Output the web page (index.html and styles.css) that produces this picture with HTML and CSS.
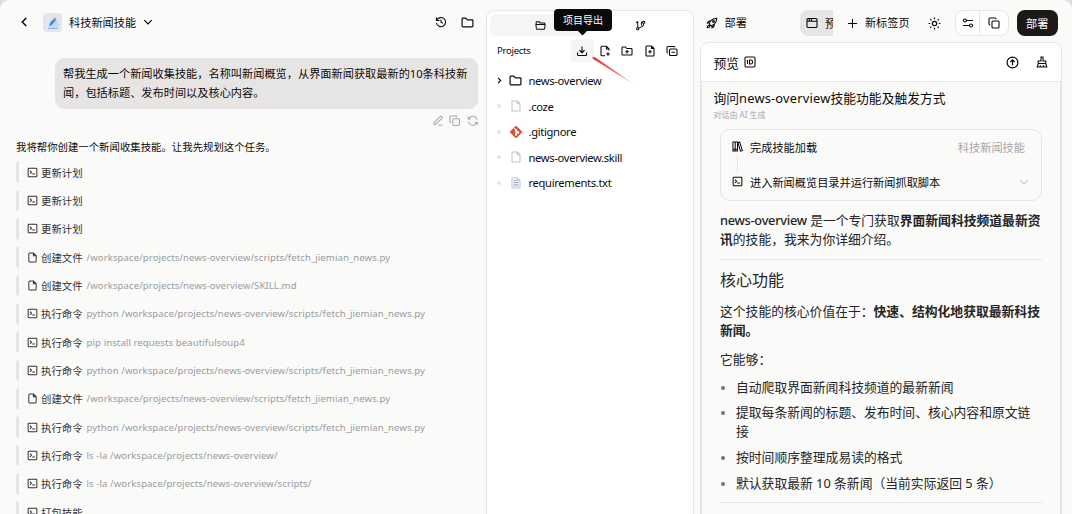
FILE: index.html
```
<!DOCTYPE html>
<html lang="zh-CN">
<head>
  <meta charset="UTF-8" />
  <meta name="viewport" content="width=device-width, initial-scale=1.0"/>
  <title>科技新闻技能</title>
  <link rel="stylesheet" href="styles.css">
</head>
<body>
  <!-- shared icons -->
  <svg class="sprite">
    <symbol id="i-term" viewBox="0 0 24 24"><rect x="2.5" y="2.5" width="19" height="19" rx="2"/><path d="M6.5 8l3.5 3.5L6.5 15M11.500 15.500h6"/></symbol>
    <symbol id="i-doc" viewBox="0 0 24 24"><path d="M14 2H6.500a2.500 2.500 0 0 0-2.500 2.500v15A2.500 2.500 0 0 0 6.500 22h11a2.500 2.500 0 0 0 2.500-2.500V8zM14 2v6h6"/></symbol>
    <symbol id="i-page" viewBox="0 0 24 24"><path d="M14.500 2H4v20h16V7.500zM14.500 2v5.500H20"/></symbol>
    <symbol id="i-folder" viewBox="0 0 24 24"><path d="M2 5.500A1.500 1.500 0 0 1 3.500 4h5.300l2.700 3h9A1.500 1.500 0 0 1 22 8.500v10a1.500 1.500 0 0 1-1.500 1.500h-17A1.500 1.500 0 0 1 2 18.500z"/></symbol>
    <symbol id="i-copy" viewBox="0 0 24 24"><rect x="8" y="8" width="14" height="14" rx="2"/><path d="M4.500 16H4a2 2 0 0 1-2-2V4a2 2 0 0 1 2-2h10a2 2 0 0 1 2 2v.5"/></symbol>
    <symbol id="i-down" viewBox="0 0 24 24"><path d="M3 7.500l9 9 9-9"/></symbol>
  </svg>

  <div class="app">
    <section class="chat">
      <header class="chatHeader">
        <svg class="icon back" viewBox="0 0 24 24"><path d="M16.500 4l-8 8 8 8"/></svg>
        <span class="avatar">
          <svg viewBox="0 0 19 19"><path d="M5 15L8 8l5-4 3 8-2 3z" fill="#bcdcf5"/><path d="M6 13l1.500-4L12 5l1 2-4 5z" fill="#4b84df"/><path d="M10 6l2.500-1.500.5 2-1.500 1z" fill="#f17975"/><path d="M5 15.500h10" stroke="#9bb1ec" stroke-width="1"/></svg>
        </span>
        <span class="chatTitle">科技新闻技能</span>
        <svg class="icon titleArrow"><use href="#i-down"/></svg>
        <svg class="icon history" viewBox="0 0 24 24"><path d="M3.500 8.500a9.200 9.200 0 1 1-.6 5.500M3 3v6h6M12 7v5.500l4 2"/></svg>
        <svg class="icon headFolder"><use href="#i-folder"/></svg>
      </header>

      <div class="bubble">帮我生成一个新闻收集技能，名称叫新闻概览，从界面新闻获取最新的10条科技新闻，包括标题、发布时间以及核心内容。</div>
      <div class="bubbleActions">
        <svg class="icon" viewBox="0 0 24 24"><path d="M4 20l1-5L17 3.500a2.200 2.200 0 0 1 3.500 3.500L9 18.500zM13 21.500h9"/></svg>
        <svg class="icon"><use href="#i-copy"/></svg>
        <svg class="icon" viewBox="0 0 24 24"><path d="M21 10A9 9 0 0 0 5 6L2.500 8.500M2.500 3v5.500H8M3 14a9 9 0 0 0 16 4l2.500-2.500M21.500 21v-5.500H16"/></svg>
      </div>

      <p class="intro">我将帮你创建一个新闻收集技能。让我先规划这个任务。</p>
      <div class="steps">
        <div class="step"><svg class="icon"><use href="#i-term"/></svg>更新计划</div>
        <div class="step"><svg class="icon"><use href="#i-term"/></svg>更新计划</div>
        <div class="step"><svg class="icon"><use href="#i-term"/></svg>更新计划</div>
        <div class="step"><svg class="icon"><use href="#i-doc"/></svg>创建文件<code>/workspace/projects/news-overview/scripts/fetch_jiemian_news.py</code></div>
        <div class="step"><svg class="icon"><use href="#i-doc"/></svg>创建文件<code>/workspace/projects/news-overview/SKILL.md</code></div>
        <div class="step"><svg class="icon"><use href="#i-term"/></svg>执行命令<code>python /workspace/projects/news-overview/scripts/fetch_jiemian_news.py</code></div>
        <div class="step"><svg class="icon"><use href="#i-term"/></svg>执行命令<code>pip install requests beautifulsoup4</code></div>
        <div class="step"><svg class="icon"><use href="#i-term"/></svg>执行命令<code>python /workspace/projects/news-overview/scripts/fetch_jiemian_news.py</code></div>
        <div class="step"><svg class="icon"><use href="#i-doc"/></svg>创建文件<code>/workspace/projects/news-overview/scripts/fetch_jiemian_news.py</code></div>
        <div class="step"><svg class="icon"><use href="#i-term"/></svg>执行命令<code>python /workspace/projects/news-overview/scripts/fetch_jiemian_news.py</code></div>
        <div class="step"><svg class="icon"><use href="#i-term"/></svg>执行命令<code>ls -la /workspace/projects/news-overview/</code></div>
        <div class="step"><svg class="icon"><use href="#i-term"/></svg>执行命令<code>ls -la /workspace/projects/news-overview/scripts/</code></div>
        <div class="step"><svg class="icon"><use href="#i-term"/></svg>打包技能</div>
      </div>
    </section>

    <section class="files">
      <div class="fileTabs">
        <div class="fileTab active"><svg class="icon" viewBox="0 0 24 24"><path d="M2.500 10V5.500A1.500 1.500 0 0 1 4 4h5l2.500 2.500H20A1.500 1.500 0 0 1 21.500 8v2M2 10h20l-1 9a1.500 1.500 0 0 1-1.500 1.300h-15A1.500 1.500 0 0 1 3 19z"/></svg></div>
        <div class="fileTab"><svg class="icon" viewBox="0 0 24 24"><circle cx="6" cy="19" r="2.500"/><circle cx="19" cy="5" r="2.500"/><path d="M6 16.500V3M2.500 6.500L6 3M19 7.500c0 6-3 7-10.500 10M14 3v9"/></svg></div>
      </div>
      <div class="projectBar">
        <span>Projects</span>
        <div class="tools">
          <button class="tool export">
            <svg class="icon" viewBox="0 0 24 24"><path d="M12 3v12M7 10.500l5 5 5-5M3 15v4a2 2 0 0 0 2 2h14a2 2 0 0 0 2-2v-4"/></svg>
            <span class="tooltip">项目导出</span>
            <svg class="pointer" viewBox="0 0 44 29">
              <defs><linearGradient id="fade"><stop offset="0" stop-color="#f23538"/><stop offset=".6" stop-color="#f4595b"/><stop offset="1" stop-color="#fbd0d0"/></linearGradient></defs>
              <path d="M0 0l3.200.3L43 28 1.500 2.300z" fill="url(#fade)"/>
            </svg>
          </button>
          <button class="tool"><svg class="icon" viewBox="0 0 24 24"><path d="M20 11V8l-5-5.500H6a2 2 0 0 0-2 2v15a2 2 0 0 0 2 2h6M15 2.500V8h5M18 14.500v7M14.500 18h7"/></svg></button>
          <button class="tool"><svg class="icon" viewBox="0 0 24 24"><path d="M2 5.500A1.500 1.500 0 0 1 3.500 4h5.300l2.700 3h9A1.500 1.500 0 0 1 22 8.500v10a1.500 1.500 0 0 1-1.500 1.500h-17A1.500 1.500 0 0 1 2 18.500zM12 10v7M8.500 13.500h7"/></svg></button>
          <button class="tool"><svg class="icon" viewBox="0 0 24 24"><path d="M15 2H5.500A1.500 1.500 0 0 0 4 3.500v17A1.500 1.500 0 0 0 5.500 22h13a1.500 1.500 0 0 0 1.500-1.500V7zM15 2v5h5M12 10v7M8.500 13.500h7"/></svg></button>
          <button class="tool"><svg class="icon" viewBox="0 0 24 24"><rect x="7" y="8" width="15" height="13" rx="2"/><path d="M3.500 16A1.500 1.500 0 0 1 2 14.500V5a2 2 0 0 1 2-2h12a2 2 0 0 1 2 1.500M11 14.500h7"/></svg></button>
        </div>
      </div>
      <ul class="tree">
        <li><span class="mark"><svg class="caret" viewBox="0 0 24 24"><path d="M7 3l9 9-9 9"/></svg></span><svg class="icon dir"><use href="#i-folder"/></svg>news-overview</li>
        <li><span class="mark dot"></span><svg class="icon file"><use href="#i-page"/></svg>.coze</li>
        <li><span class="mark dot"></span><svg class="icon git" viewBox="0 0 24 24"><path d="M12 .8L23.200 12 12 23.200.8 12z" fill="#dd4c35" stroke="#dd4c35"/><path d="M8.500 4.500L12 8v9M12 9l4 4" stroke="#fff"/><circle cx="12" cy="17" r="1.300" fill="#fff" stroke="#fff"/><circle cx="16" cy="13" r="1.300" fill="#fff" stroke="#fff"/><circle cx="12" cy="8.500" r="1.300" fill="#fff" stroke="#fff"/></svg>.gitignore</li>
        <li><span class="mark dot"></span><svg class="icon file"><use href="#i-page"/></svg>news-overview.skill</li>
        <li><span class="mark dot"></span><svg class="icon file" viewBox="0 0 24 24"><path d="M14.500 2H4v20h16V7.500zM14.500 2v5.500H20"/><path d="M7 7h5M7 11h10M7 14.500h10M7 18h10" stroke="#9badc5"/></svg>requirements.txt</li>
      </ul>
    </section>

    <section class="preview">
      <header class="topBar">
        <svg class="icon rocket" viewBox="0 0 24 24"><path d="M8 16l-1.500-2.500C8 8 12 3 21.500 2.500 21 12 16 16 10.500 17.500zM7 12H2.500c1-3 3-5 7-4.500M12 17v4.500c3-1 5-3 4.500-7M2.500 21.500c0-3 1-4.500 3-5s3 1 2 3-2 2-5 2z"/><circle cx="15" cy="9" r="1.800"/></svg>
        <span>部署</span>
        <div class="pageTab"><svg class="icon" viewBox="0 0 24 24"><rect x="2" y="3" width="20" height="18" rx="2"/><path d="M2 8.500h20M6.500 3v5M11 3v5"/></svg><span>预览</span></div>
        <svg class="icon plus" viewBox="0 0 24 24"><path d="M12 2v20M2 12h20"/></svg>
        <span>新标签页</span>
        <svg class="icon sun" viewBox="0 0 24 24"><circle cx="12" cy="12" r="4"/><path d="M12 1v3M12 20v3M1 12h3M20 12h3M4.200 4.200l2 2M17.800 17.800l2 2M4.200 19.800l2-2M17.800 6.200l2-2"/></svg>
        <div class="group">
          <button><svg class="icon" viewBox="0 0 24 24"><circle cx="6" cy="7" r="3"/><circle cx="18" cy="17" r="3"/><path d="M9 7h13M2 17h13"/></svg></button>
          <button><svg class="icon"><use href="#i-copy"/></svg></button>
        </div>
        <button class="deploy">部署</button>
      </header>

      <div class="panel">
        <div class="panelHeader">
          <span>预览</span>
          <svg class="icon idIcon" viewBox="0 0 24 24"><rect x="2" y="2" width="20" height="20" rx="2.500"/><path d="M7 8v8M11 8v8h2.500a3.500 3.500 0 0 0 3.500-3.500v-1A3.500 3.500 0 0 0 13.500 8z"/></svg>
          <svg class="icon up" viewBox="0 0 24 24"><circle cx="12" cy="12" r="10"/><path d="M12 17V7M8 11l4-4 4 4"/></svg>
          <svg class="icon broom" viewBox="0 0 24 24"><path d="M10 2h4v8h5.500v5h-15v-5H10zM4.500 15L2.500 22h19l-2-7M8.500 22v-3.500M15 22v-3.500"/></svg>
        </div>
        <div class="panelBody">
          <h1>询问<span class="name">news-overview</span>技能功能及触发方式</h1>
          <p class="hint">对话由 AI 生成</p>
          <div class="card">
            <div class="cardRow"><svg class="icon" viewBox="0 0 24 24"><path d="M2 2h5v20H2zM7 2h5v20H7zM13 3.500l4-1L22.500 21l-4 1zM2 18h10"/></svg>完成技能加载<span class="cardNote">科技新闻技能</span></div>
            <div class="cardLine"></div>
            <div class="cardRow"><svg class="icon"><use href="#i-term"/></svg>进入新闻概览目录并运行新闻抓取脚本<svg class="icon more"><use href="#i-down"/></svg></div>
          </div>
          <article>
            <p><b class="latin">news-overview</b> 是一个专门获取<b>界面新闻科技频道最新资讯</b>的技能，我来为你详细介绍。</p>
            <hr>
            <h2>核心功能</h2>
            <p>这个技能的核心价值在于：<b>快速、结构化地获取最新科技新闻。</b></p>
            <p>它能够：</p>
            <ul>
              <li>自动爬取界面新闻科技频道的最新新闻</li>
              <li>提取每条新闻的标题、发布时间、核心内容和原文链接</li>
              <li>按时间顺序整理成易读的格式</li>
              <li>默认获取最新 10 条新闻（当前实际返回 5 条）</li>
            </ul>
            <hr class="last">
          </article>
        </div>
      </div>
    </section>
  </div>
</body>
</html>
```
FILE: styles.css
```
* {
  box-sizing: border-box;
}

body {
  margin: 0;
  height: 100vh;
  overflow: hidden;
  background-color: #dededd;
  color: #0c0a09;
  font-family: 'Noto Sans', 'Noto Sans CJK SC', sans-serif;
  font-size: 11.2px;
}

button {
  font: inherit;
  border: none;
  padding: 0;
  background: none;
  color: inherit;
}

p, h1, h2, ul {
  margin: 0;
  padding: 0;
}

ul {
  list-style: none;
}

.sprite {
  display: none;
}

.icon, .caret {
  width: 12px;
  height: 12px;
  flex: none;
  fill: none;
  stroke: currentColor;
  stroke-width: 2.2;
}

.app {
  display: flex;
  height: 100vh;
  background-color: #fafaf9;
  border-radius: 9px 9px 0 0;
}

/* chat */
.chat {
  width: 486px;
  flex: none;
  padding: 10px 8px 0 16px;
  overflow: hidden;
}

.chatHeader {
  display: flex;
  align-items: center;
  height: 24px;
  padding-left: 2px;
}

.back {
  stroke-width: 3;
}

.avatar {
  display: flex;
  width: 19px;
  height: 19px;
  margin: 0 7px 0 13px;
  border-radius: 4px;
  background-color: #e1e6ea;
}

.chatTitle {
  margin-right: 7px;
}

.titleArrow {
  width: 10px;
  height: 10px;
  stroke-width: 3;
}

.history {
  margin-left: auto;
}

.headFolder {
  width: 13px;
  height: 13px;
  margin: 0 4px 0 14px;
}

.bubble {
  width: 423px;
  height: 51px;
  margin: 24px 0 0 auto;
  padding: 6px 8px;
  line-height: 19px;
  border-radius: 9px;
  background-color: #e7e5e4;
}

.bubbleActions {
  display: flex;
  justify-content: flex-end;
  gap: 6px;
  margin-top: 6px;
  color: #a8a8ad;
}

.bubbleActions .icon {
  width: 11.5px;
  height: 11.5px;
}

.intro {
  margin-top: 12.5px;
  font-size: 10.4px;
  line-height: 17px;
}

.steps {
  display: flex;
  flex-direction: column;
  gap: 6.75px;
  margin-top: 5.3px;
}

.step {
  display: flex;
  align-items: center;
  flex: none;
  height: 21.6px;
  padding-left: 8px;
  border-left: 3px solid #e7e5e4;
  border-radius: 3px 0 0 3px;
  font-size: 10.4px;
  color: #333;
  white-space: nowrap;
}

.step .icon {
  width: 11px;
  height: 11px;
  margin-right: 3px;
}

.step code {
  margin-left: 4px;
  font-family: inherit;
  font-size: 9.6px;
  letter-spacing: 0.075px;
  color: #9b9ba0;
}

/* project files */
.files {
  width: 208px;
  flex: none;
  margin-top: 10px;
  padding: 3px;
  background-color: #fff;
  border: 1px solid #e5e5e3;
  border-bottom: none;
  border-radius: 9px 9px 0 0;
}

.fileTabs {
  display: flex;
  height: 22px;
}

.fileTab {
  flex: 1;
  display: flex;
  align-items: center;
  justify-content: center;
  border-radius: 6px;
}

.fileTab.active {
  background-color: #f5f5f4;
}

.fileTab .icon {
  width: 11px;
  height: 11px;
}

.projectBar {
  display: flex;
  align-items: center;
  justify-content: space-between;
  height: 29px;
  padding: 0 6.5px 0 7px;
  font-size: 9.6px;
  letter-spacing: -0.3px;
}

.tools {
  display: flex;
}

.tool {
  position: relative;
  display: flex;
  align-items: center;
  justify-content: center;
  width: 22.5px;
  height: 23px;
  border-radius: 4px;
}

.tool .icon {
  width: 12px;
  height: 12px;
}

.export {
  background-color: #f5f5f4;
}

.tooltip {
  position: absolute;
  left: -17px;
  top: -30px;
  width: 58px;
  height: 22px;
  line-height: 22px;
  border-radius: 4px;
  background-color: #0a0a0a;
  color: #fff;
  font-size: 10px;
  letter-spacing: 0;
  z-index: 2;
}

.tooltip::after {
  content: '';
  position: absolute;
  left: 25px;
  top: 18px;
  width: 7px;
  height: 7px;
  background-color: #0a0a0a;
  transform: rotate(45deg);
}

.pointer {
  position: absolute;
  left: 21px;
  top: 18px;
  width: 44px;
  height: 29px;
  z-index: 1;
}

.tree {
  padding: 2.8px 0 0 5px;
}

.tree li {
  display: flex;
  align-items: center;
  height: 25.5px;
  letter-spacing: -0.33px;
}

.mark {
  display: flex;
  justify-content: center;
  width: 8px;
  margin-right: 6.5px;
}

.caret {
  width: 7px;
  height: 7px;
  stroke-width: 4;
}

.dot::before {
  content: '';
  width: 4px;
  height: 4px;
  border-radius: 50%;
  background-color: #e5e5e5;
}

.tree .icon {
  margin-right: 7px;
}

.tree .dir {
  width: 13px;
  height: 13px;
  margin: 0 6.5px 0 -0.5px;
}

.tree .file {
  color: #c5c5c5;
}

/* preview */
.preview {
  display: flex;
  flex-direction: column;
  flex: 1;
  min-width: 0;
  padding: 10px 10px 0 6px;
}

.topBar {
  display: flex;
  align-items: center;
  height: 26px;
  margin-right: -6px;
  padding-left: 6px;
}

.rocket {
  margin-right: 6.5px;
}

.topBar > span {
  line-height: 15px;
  padding-bottom: 1px;
}

.pageTab {
  display: flex;
  align-items: center;
  width: 33px;
  height: 26px;
  margin: 0 14px 0 53px;
  padding-left: 6px;
  overflow: hidden;
  border-radius: 8px 0 0 8px;
  background-color: #e7e5e4;
}

.pageTab span {
  flex: none;
  margin-left: 7px;
}

.plus {
  width: 11px;
  height: 11px;
  margin-right: 7px;
}

.sun {
  width: 13px;
  height: 13px;
  margin: 0 14px 0 18px;
}

.group {
  display: flex;
  width: 54px;
  height: 26px;
  margin-right: 8px;
  border: 1px solid #e5e5e3;
  border-radius: 8px;
  background-color: #fff;
}

.group button {
  flex: 1;
  display: flex;
  align-items: center;
  justify-content: center;
}

.group button + button {
  flex: 1.15;
  border-left: 1px solid #e5e5e3;
}

.deploy {
  width: 41px;
  height: 26px;
  border-radius: 8px;
  background-color: #1c1917;
  color: #fff;
}

.panel {
  display: flex;
  flex-direction: column;
  flex: 1;
  min-height: 0;
  margin-top: 6px;
  border: 1px solid #e5e5e3;
  border-bottom: none;
  border-radius: 9px 9px 0 0;
  background-color: #fff;
}

.panelHeader {
  display: flex;
  align-items: center;
  flex: none;
  height: 39px;
  padding: 0 13.5px 0 12.5px;
  border-bottom: 1px solid #e5e5e3;
  font-size: 12.8px;
}

.idIcon {
  margin-left: 5px;
}

.up {
  width: 13px;
  height: 13px;
  margin-left: auto;
}

.broom {
  margin-left: 17px;
}

.panelBody {
  flex: 1;
  min-height: 0;
  overflow: hidden;
  border: solid #e5e5e3;
  border-width: 0 1px;
  background-color: #fafaf9;
}

h1 {
  padding: 7px 0 0 11.5px;
  font-size: 12.8px;
  font-weight: normal;
  line-height: 19px;
}

.name {
  letter-spacing: 0.22px;
}

.hint {
  padding-left: 11.5px;
  font-size: 8px;
  line-height: 14px;
  color: #a6a6ab;
}

.card {
  height: 72px;
  margin: 7px 18px 0;
  padding: 8px 11px;
  border: 1px solid #e5e5e3;
  border-radius: 10px;
}

.cardRow {
  display: flex;
  align-items: center;
  height: 17px;
}

.cardRow .icon {
  width: 11px;
  height: 11px;
  margin-right: 7px;
}

.cardNote {
  margin-left: auto;
  margin-right: 5px;
  color: #a6a6ab;
}

.cardRow .more {
  width: 10px;
  height: 10px;
  margin: 0 1px 0 auto;
  color: #a6a6ab;
}

.cardLine {
  width: 1px;
  height: 16px;
  margin: 1px 0 1px 4.5px;
  background-color: #e5e5e3;
}

article {
  padding: 0 18px;
  font-size: 12.8px;
  line-height: 19.2px;
  color: #252525;
}

article p {
  margin-top: 9.6px;
}

article b {
  font-weight: 700;
}

article .latin {
  font-weight: 500;
  letter-spacing: -0.28px;
}

article hr {
  height: 1px;
  margin: 10px 0 0;
  border: none;
  background-color: #e5e5e3;
}

h2 {
  margin-top: 8.3px;
  font-size: 16px;
  font-weight: normal;
  line-height: 24px;
}

article ul {
  margin-top: 8.6px;
}

article li {
  display: flex;
  margin-bottom: 6.4px;
}

article li::before {
  content: '';
  flex: none;
  width: 4px;
  height: 4px;
  margin: 8px 11.5px 0 0.5px;
  border-radius: 50%;
  background-color: #71717f;
}

article .last {
  margin-top: 9px;
}
```
